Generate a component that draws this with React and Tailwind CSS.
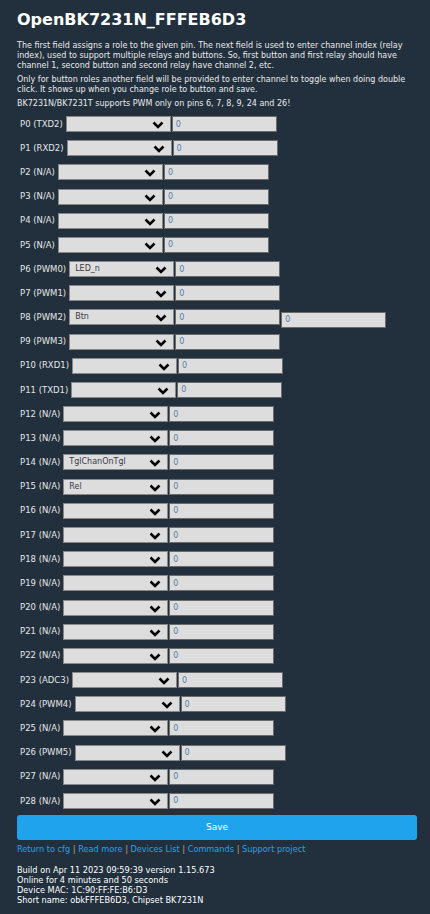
import React from "react";

const pins = [
  ["P0 (TXD2)", ""],
  ["P1 (RXD2)", ""],
  ["P2 (N/A)", ""],
  ["P3 (N/A)", ""],
  ["P4 (N/A)", ""],
  ["P5 (N/A)", ""],
  ["P6 (PWM0)", "LED_n"],
  ["P7 (PWM1)", ""],
  ["P8 (PWM2)", "Btn", true],
  ["P9 (PWM3)", ""],
  ["P10 (RXD1)", ""],
  ["P11 (TXD1)", ""],
  ["P12 (N/A)", ""],
  ["P13 (N/A)", ""],
  ["P14 (N/A)", "TglChanOnTgl"],
  ["P15 (N/A)", "Rel"],
  ["P16 (N/A)", ""],
  ["P17 (N/A)", ""],
  ["P18 (N/A)", ""],
  ["P19 (N/A)", ""],
  ["P20 (N/A)", ""],
  ["P21 (N/A)", ""],
  ["P22 (N/A)", ""],
  ["P23 (ADC3)", ""],
  ["P24 (PWM4)", ""],
  ["P25 (N/A)", ""],
  ["P26 (PWM5)", ""],
  ["P27 (N/A)", ""],
  ["P28 (N/A)", ""],
];

const links = ["Return to cfg", "Read more", "Devices List", "Commands", "Support project"];

const Chevron = () => (
  <svg width="12" height="8" viewBox="0 0 12 8" className="absolute right-[6px] top-[4px] pointer-events-none">
    <path d="M1.5 1.5 L6 6 L10.5 1.5" stroke="#000" strokeWidth="2.6" fill="none" />
  </svg>
);

const Field = () => (
  <input
    readOnly
    value="0"
    className="w-[105px] h-[16px] bg-[#dddddd] border border-[#6b6b6b] px-[3px] text-[8px] text-[#5a7ca6] outline-none"
  />
);

const PinRow = ({ label, role, extra }) => (
  <div className="flex items-center h-[24.18px] pl-[3px]">
    <span className="text-[8.5px] text-[#e6e6e6] mr-[3px] whitespace-nowrap">{label}</span>
    <div className="relative w-[105px] h-[16px] bg-[#dddddd] border border-[#888] mr-[1px]">
      <span className="absolute left-[5px] top-[1px] text-[8px] text-[#3a3a48] leading-[12px]">{role}</span>
      <Chevron />
    </div>
    <Field />
    {extra && <div className="ml-[1px]"><Field /></div>}
  </div>
);

export default function App() {
  return (
    <div className="min-h-[914px] bg-[#22303e] text-[#eaeaea] pl-[17px] pr-[13px] pt-[9px] pb-4" style={{ fontFamily: '"DejaVu Sans", Verdana, sans-serif' }}>
      <h1 className="text-[16px] font-bold text-white leading-[22px] mb-[10px]">OpenBK7231N_FFFEB6D3</h1>
      <div className="pr-[4px]">
        <p className="text-[8px] leading-[10px] mb-[4px]">
          The first field assigns a role to the given pin. The next field is used to enter channel index (relay index), used to support multiple relays and buttons. So, first button and first relay should have channel 1, second button and second relay have channel 2, etc.
        </p>
        <p className="text-[8px] leading-[10px] mb-[4px]">
          Only for button roles another field will be provided to enter channel to toggle when doing double click. It shows up when you change role to button and save.
        </p>
        <p className="text-[8px] leading-[10px] mb-[3px]">BK7231N/BK7231T supports PWM only on pins 6, 7, 8, 9, 24 and 26!</p>
      </div>
      <div className="flex flex-col">
        {pins.map(([label, role, extra]) => (
          <PinRow key={label} label={label} role={role} extra={extra} />
        ))}
      </div>
      <button className="w-full h-[25px] bg-[#1fa3ec] rounded-[3px] text-white text-[9px]">Save</button>
      <div className="mt-[3px] text-[8.2px] leading-[12px] whitespace-nowrap">
        {links.map((l, i) => (
          <span key={l}>
            {i > 0 && <span className="text-[#c3a474]"> | </span>}
            <span className="text-[#1fa3ec]">{l}</span>
          </span>
        ))}
      </div>
      <div className="mt-[10px] text-[8.2px] leading-[10px] text-white">
        <div>Build on Apr 11 2023 09:59:39 version 1.15.673</div>
        <div>Online for 4 minutes and 50 seconds</div>
        <div>Device MAC: 1C:90:FF:FE:B6:D3</div>
        <div>Short name: obkFFFEB6D3, Chipset BK7231N</div>
      </div>
    </div>
  );
}
